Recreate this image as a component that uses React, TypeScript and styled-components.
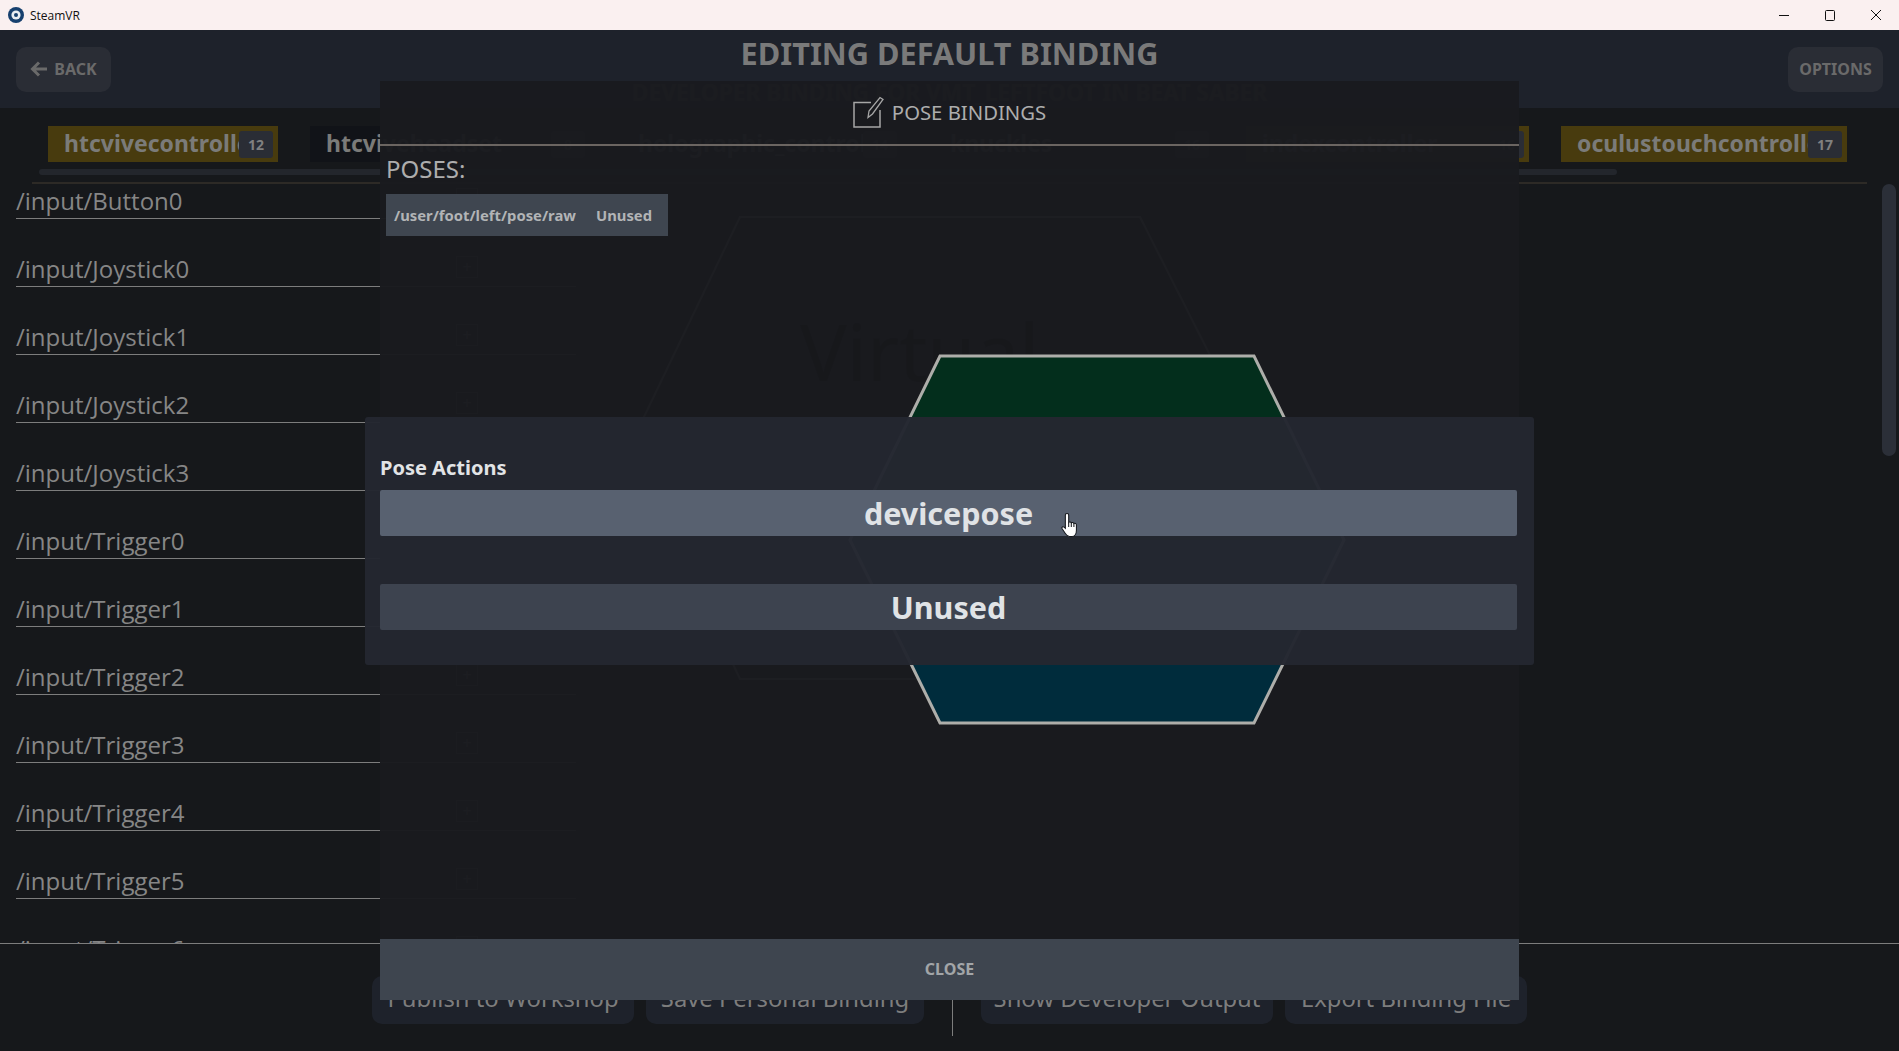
import React from "react";
import styled, { createGlobalStyle } from "styled-components";

const inputs = [
  "/input/Button0",
  "/input/Joystick0",
  "/input/Joystick1",
  "/input/Joystick2",
  "/input/Joystick3",
  "/input/Trigger0",
  "/input/Trigger1",
  "/input/Trigger2",
  "/input/Trigger3",
  "/input/Trigger4",
  "/input/Trigger5",
  "/input/Trigger6",
];

const tabs = [
  { name: "htcvivecontroller", count: 12, width: 230, active: true },
  { name: "htcviveheadset", count: 8, width: 280, active: false },
  { name: "holographic_controller", count: 14, width: 280, active: false },
  { name: "knuckles", count: 16, width: 280, active: false },
  { name: "indexcontroller", count: 16, width: 283, active: true },
  { name: "oculustouchcontroller", count: 17, width: 286, active: true },
];

export default function App() {
  return (
    <Page>
      <GlobalStyle />
      <TitleBar>
        <AppIcon viewBox="0 0 16 16">
          <circle cx="8" cy="8" r="8" fill="#17406e" />
          <circle cx="8" cy="8" r="4.6" fill="#e8edf3" />
          <circle cx="8" cy="8" r="2" fill="#17406e" />
        </AppIcon>
        <AppName>SteamVR</AppName>
        <WindowControls>
          <svg width="12" height="12" viewBox="0 0 12 12">
            <path d="M1 6.5H11" stroke="#111" />
          </svg>
          <svg width="12" height="12" viewBox="0 0 12 12">
            <rect x="1.5" y="1.5" width="9" height="10" rx="1" fill="none" stroke="#111" />
          </svg>
          <svg width="12" height="12" viewBox="0 0 12 12">
            <path d="M1 1L11 11M11 1L1 11" stroke="#111" />
          </svg>
        </WindowControls>
      </TitleBar>

      <Header>
        <HeaderButton>
          <BackArrow viewBox="0 0 18 16">
            <path d="M17 8H3M9 1.5L2.5 8L9 14.5" fill="none" stroke="#6a6a6a" strokeWidth="3" />
          </BackArrow>
          BACK
        </HeaderButton>
        <TitleBlock>
          <Title>EDITING DEFAULT BINDING</Title>
          <Subtitle>DEVELOPER BINDING FOR VMT_LEFTFOOT IN BEAT SABER</Subtitle>
        </TitleBlock>
        <HeaderButton>OPTIONS</HeaderButton>
      </Header>

      <Content>
        <TabRow>
          {tabs.map((tab) => (
            <Tab key={tab.name} $width={tab.width} $active={tab.active}>
              <TabName>{tab.name}</TabName>
              <TabBadge>{tab.count}</TabBadge>
            </Tab>
          ))}
        </TabRow>
        <TabScroll />
        <TabDivider />
        <ListArea>
          <InputList>
            {inputs.map((input) => (
              <InputRow key={input}>
                {input}
                <AddBox>+</AddBox>
              </InputRow>
            ))}
          </InputList>
          <ListScrollThumb />
        </ListArea>
      </Content>

      <Footer>
        <FooterButton $width={262}>Publish to Workshop</FooterButton>
        <FooterButton $width={278}>Save Personal Binding</FooterButton>
        <FooterSeparator />
        <FooterButton $width={292}>Show Developer Output</FooterButton>
        <FooterButton $width={242}>Export Binding File</FooterButton>
      </Footer>

      <BackHex viewBox="0 0 630 466">
        <path d="M112 2H512L628 231L512 464H112L2 231Z" fill="none" stroke="#a8a8a8" strokeWidth="2" />
      </BackHex>

      <Modal>
        <ModalHeader>
          <svg width="32" height="32" viewBox="0 0 32 32">
            <path d="M18 6.5H1V31H27V14" fill="none" stroke="#a6a6a6" strokeWidth="1.5" />
            <path d="M15 21.5L16 15L27 1.5L30 3.5L19.5 18Z" fill="none" stroke="#a6a6a6" strokeWidth="1.3" />
          </svg>
          POSE BINDINGS
        </ModalHeader>
        <ModalBody>
          <PosesLabel>POSES:</PosesLabel>
          <PoseRow>
            <span>/user/foot/left/pose/raw</span>
            <span>Unused</span>
          </PoseRow>
          <GhostWord>Virtual</GhostWord>
          <PoseHex viewBox="0 0 500 371">
            <path d="M92 2H406L496 186H2Z" fill="#032e1c" />
            <path d="M2 186H496L406 369H92Z" fill="#002c3c" />
            <path d="M92 2H406L496 186L406 369H92L2 186Z" fill="none" stroke="#aeaeaa" strokeWidth="3" />
          </PoseHex>
        </ModalBody>
        <CloseBar>CLOSE</CloseBar>
      </Modal>

      <Dialog>
        <DialogLabel>Pose Actions</DialogLabel>
        <ActionButton $hover>devicepose</ActionButton>
        <ActionButton>Unused</ActionButton>
      </Dialog>

      <Cursor viewBox="0.5 0.5 15.2 23">
        <path
          d="M6.2 1C7.2 1 7.8 1.7 7.8 2.7V9.5C8.3 9 9.9 9 10.3 10C10.9 9.4 12.5 9.5 12.8 10.6C13.6 10.1 15.2 10.5 15.2 11.8V17C15.2 20 13.8 23 11 23H8.5C6.5 23 5.6 21.8 4.6 20.2L1.4 15.4C.7 14.2 2.3 13 3.4 14L4.6 15.2V2.7C4.6 1.7 5.2 1 6.2 1Z"
          fill="#fff"
          stroke="#14171c"
          strokeWidth="1"
        />
        <path d="M7.8 9.5V14M10.3 10V14M12.8 10.6V14" stroke="#14171c" strokeWidth="1" />
      </Cursor>
    </Page>
  );
}

const GlobalStyle = createGlobalStyle`
  html, body {
    margin: 0;
    padding: 0;
    background: #17191c;
  }
  * {
    box-sizing: border-box;
  }
`;

const Page = styled.div`
  position: relative;
  width: 1899px;
  height: 1051px;
  overflow: hidden;
  display: flex;
  flex-direction: column;
  background: #16181b;
  font-family: "Noto Sans", "Open Sans", sans-serif;
  color: #828282;
`;

const TitleBar = styled.div`
  height: 30px;
  flex: none;
  display: flex;
  align-items: center;
  padding: 0 0 0 8px;
  background: #faf0f0;
`;

const AppIcon = styled.svg`
  width: 16px;
  height: 16px;
`;

const AppName = styled.span`
  margin-left: 6px;
  font-family: "Open Sans", sans-serif;
  font-size: 12px;
  color: #111;
`;

const WindowControls = styled.div`
  margin-left: auto;
  display: flex;
  align-items: center;
  gap: 34px;
  padding-right: 17px;
`;

const Header = styled.header`
  height: 78px;
  flex: none;
  display: flex;
  align-items: center;
  justify-content: space-between;
  padding: 0 16px;
  background: #1e222b;
`;

const HeaderButton = styled.div`
  height: 45px;
  width: 95px;
  display: flex;
  align-items: center;
  justify-content: center;
  gap: 6px;
  border-radius: 10px;
  background: #2a2d35;
  color: #6a6a6a;
  font-size: 16px;
  font-weight: 700;
`;

const BackArrow = styled.svg`
  width: 18px;
  height: 16px;
`;

const TitleBlock = styled.div`
  align-self: flex-start;
  flex: 1;
  padding-top: 5px;
  text-align: center;
`;

const Title = styled.div`
  font-size: 30.7px;
  line-height: 36px;
  font-weight: 700;
  color: #7a7a7a;
`;

const Subtitle = styled.div`
  margin-top: 9px;
  font-size: 22.7px;
  line-height: 26px;
  font-weight: 700;
  color: #6a6a6a;
`;

const Content = styled.main`
  flex: 1;
  min-height: 0;
  display: flex;
  flex-direction: column;
  padding-top: 18px;
`;

const TabRow = styled.div`
  display: flex;
  gap: 32px;
  padding-left: 48px;
`;

const Tab = styled.div<{ $width: number; $active: boolean }>`
  width: ${(p) => p.$width}px;
  height: 36px;
  flex: none;
  display: flex;
  align-items: center;
  padding: 0 5px 0 16px;
  background: ${(p) => (p.$active ? "#483b0e" : "#111318")};
`;

const TabName = styled.span`
  flex: 1;
  min-width: 0;
  overflow: hidden;
  white-space: nowrap;
  font-size: 23px;
  line-height: 32px;
  padding-bottom: 2px;
  font-weight: 700;
  color: #7b7b79;
`;

const TabBadge = styled.span`
  width: 34px;
  height: 27px;
  flex: none;
  display: flex;
  align-items: center;
  justify-content: center;
  border-radius: 3px;
  background: #2a2d35;
  font-size: 14px;
  font-weight: 700;
  color: #808080;
`;

const TabScroll = styled.div`
  width: 1578px;
  height: 6px;
  margin: 7px 0 0 39px;
  flex: none;
  border-radius: 3px;
  background: #23262c;
`;

const TabDivider = styled.div`
  width: 1835px;
  height: 2px;
  margin: 7px 0 0 32px;
  flex: none;
  background: #2d2a26;
`;

const ListArea = styled.div`
  flex: 1;
  min-height: 0;
  display: flex;
  justify-content: space-between;
  overflow: hidden;
`;

const InputList = styled.div`
  display: flex;
  flex-direction: column;
  gap: 33px;
  padding-left: 16px;
`;

const InputRow = styled.div`
  position: relative;
  width: 560px;
  height: 35px;
  flex: none;
  border-bottom: 1px solid #7d7d7d;
  font-family: "Open Sans", sans-serif;
  font-size: 24px;
  line-height: 33px;
  color: #868686;
`;

const AddBox = styled.span`
  position: absolute;
  left: 440px;
  top: 4px;
  width: 22px;
  height: 22px;
  display: flex;
  align-items: center;
  justify-content: center;
  border: 1px solid #6a6a6a;
  font-size: 16px;
`;

const ListScrollThumb = styled.div`
  width: 14px;
  height: 272px;
  margin-right: 3px;
  border-radius: 7px;
  background: #2b2f38;
`;

const Footer = styled.footer`
  height: 108px;
  flex: none;
  display: flex;
  justify-content: center;
  align-items: flex-start;
  gap: 12px;
  padding-top: 32px;
  border-top: 1px solid #7d7d7d;
`;

const FooterButton = styled.div<{ $width: number }>`
  width: ${(p) => p.$width}px;
  height: 48px;
  padding-bottom: 4px;
  display: flex;
  align-items: center;
  justify-content: center;
  border-radius: 10px;
  background: #1e222b;
  font-size: 23.8px;
  color: #7d7d7d;
`;

const FooterSeparator = styled.div`
  width: 1px;
  height: 92px;
  margin: -32px 16px 0;
  background: #7d7d7d;
`;

const BackHex = styled.svg`
  position: absolute;
  left: 628px;
  top: 215px;
  width: 630px;
  height: 466px;
`;

const Modal = styled.section`
  position: absolute;
  left: 380px;
  top: 81px;
  width: 1139px;
  height: 919px;
  display: flex;
  flex-direction: column;
  background: rgba(26, 27, 31, 0.975);
`;

const ModalHeader = styled.div`
  height: 65px;
  padding-bottom: 2px;
  flex: none;
  display: flex;
  align-items: center;
  justify-content: center;
  gap: 7px;
  border-bottom: 2px solid #6b6561;
  font-size: 20.3px;
  color: #adadad;
`;

const ModalBody = styled.div`
  position: relative;
  flex: 1;
  min-height: 0;
  padding: 6px 6px 0;
`;

const PosesLabel = styled.div`
  font-size: 24px;
  line-height: 34px;
  color: #adadad;
`;

const PoseRow = styled.div`
  width: 282px;
  height: 42px;
  margin-top: 8px;
  display: flex;
  align-items: center;
  justify-content: space-between;
  padding: 0 16px 0 8px;
  background: #3f4650;
  font-size: 14.8px;
  font-weight: 700;
  color: #b2b4b6;
`;

const GhostWord = styled.div`
  position: absolute;
  left: 420px;
  top: 160px;
  font-size: 78px;
  line-height: 90px;
  color: rgba(0, 0, 0, 0.07);
`;

const PoseHex = styled.svg`
  position: absolute;
  left: 468px;
  top: 208px;
  width: 500px;
  height: 371px;
`;

const CloseBar = styled.div`
  height: 61px;
  padding-bottom: 2px;
  flex: none;
  display: flex;
  align-items: center;
  justify-content: center;
  background: #3e454f;
  font-size: 16px;
  font-weight: 700;
  color: #a2a5a8;
`;

const Dialog = styled.section`
  position: absolute;
  left: 365px;
  top: 417px;
  width: 1169px;
  height: 248px;
  padding: 38px 17px 0 15px;
  border-radius: 3px;
  background: rgba(36, 39, 48, 0.975);
`;

const DialogLabel = styled.div`
  margin-bottom: 10px;
  font-size: 20px;
  line-height: 25px;
  font-weight: 700;
  color: #e2e4e6;
`;

const ActionButton = styled.div<{ $hover?: boolean }>`
  height: 46px;
  margin-bottom: 48px;
  display: flex;
  align-items: center;
  justify-content: center;
  border-radius: 2px;
  background: ${(p) => (p.$hover ? "#586170" : "#3d434f")};
  font-size: 30.5px;
  font-weight: 700;
  color: #e0e3e6;
`;

const Cursor = styled.svg`
  position: absolute;
  left: 1060px;
  top: 513px;
  width: 18px;
  height: 24px;
`;
